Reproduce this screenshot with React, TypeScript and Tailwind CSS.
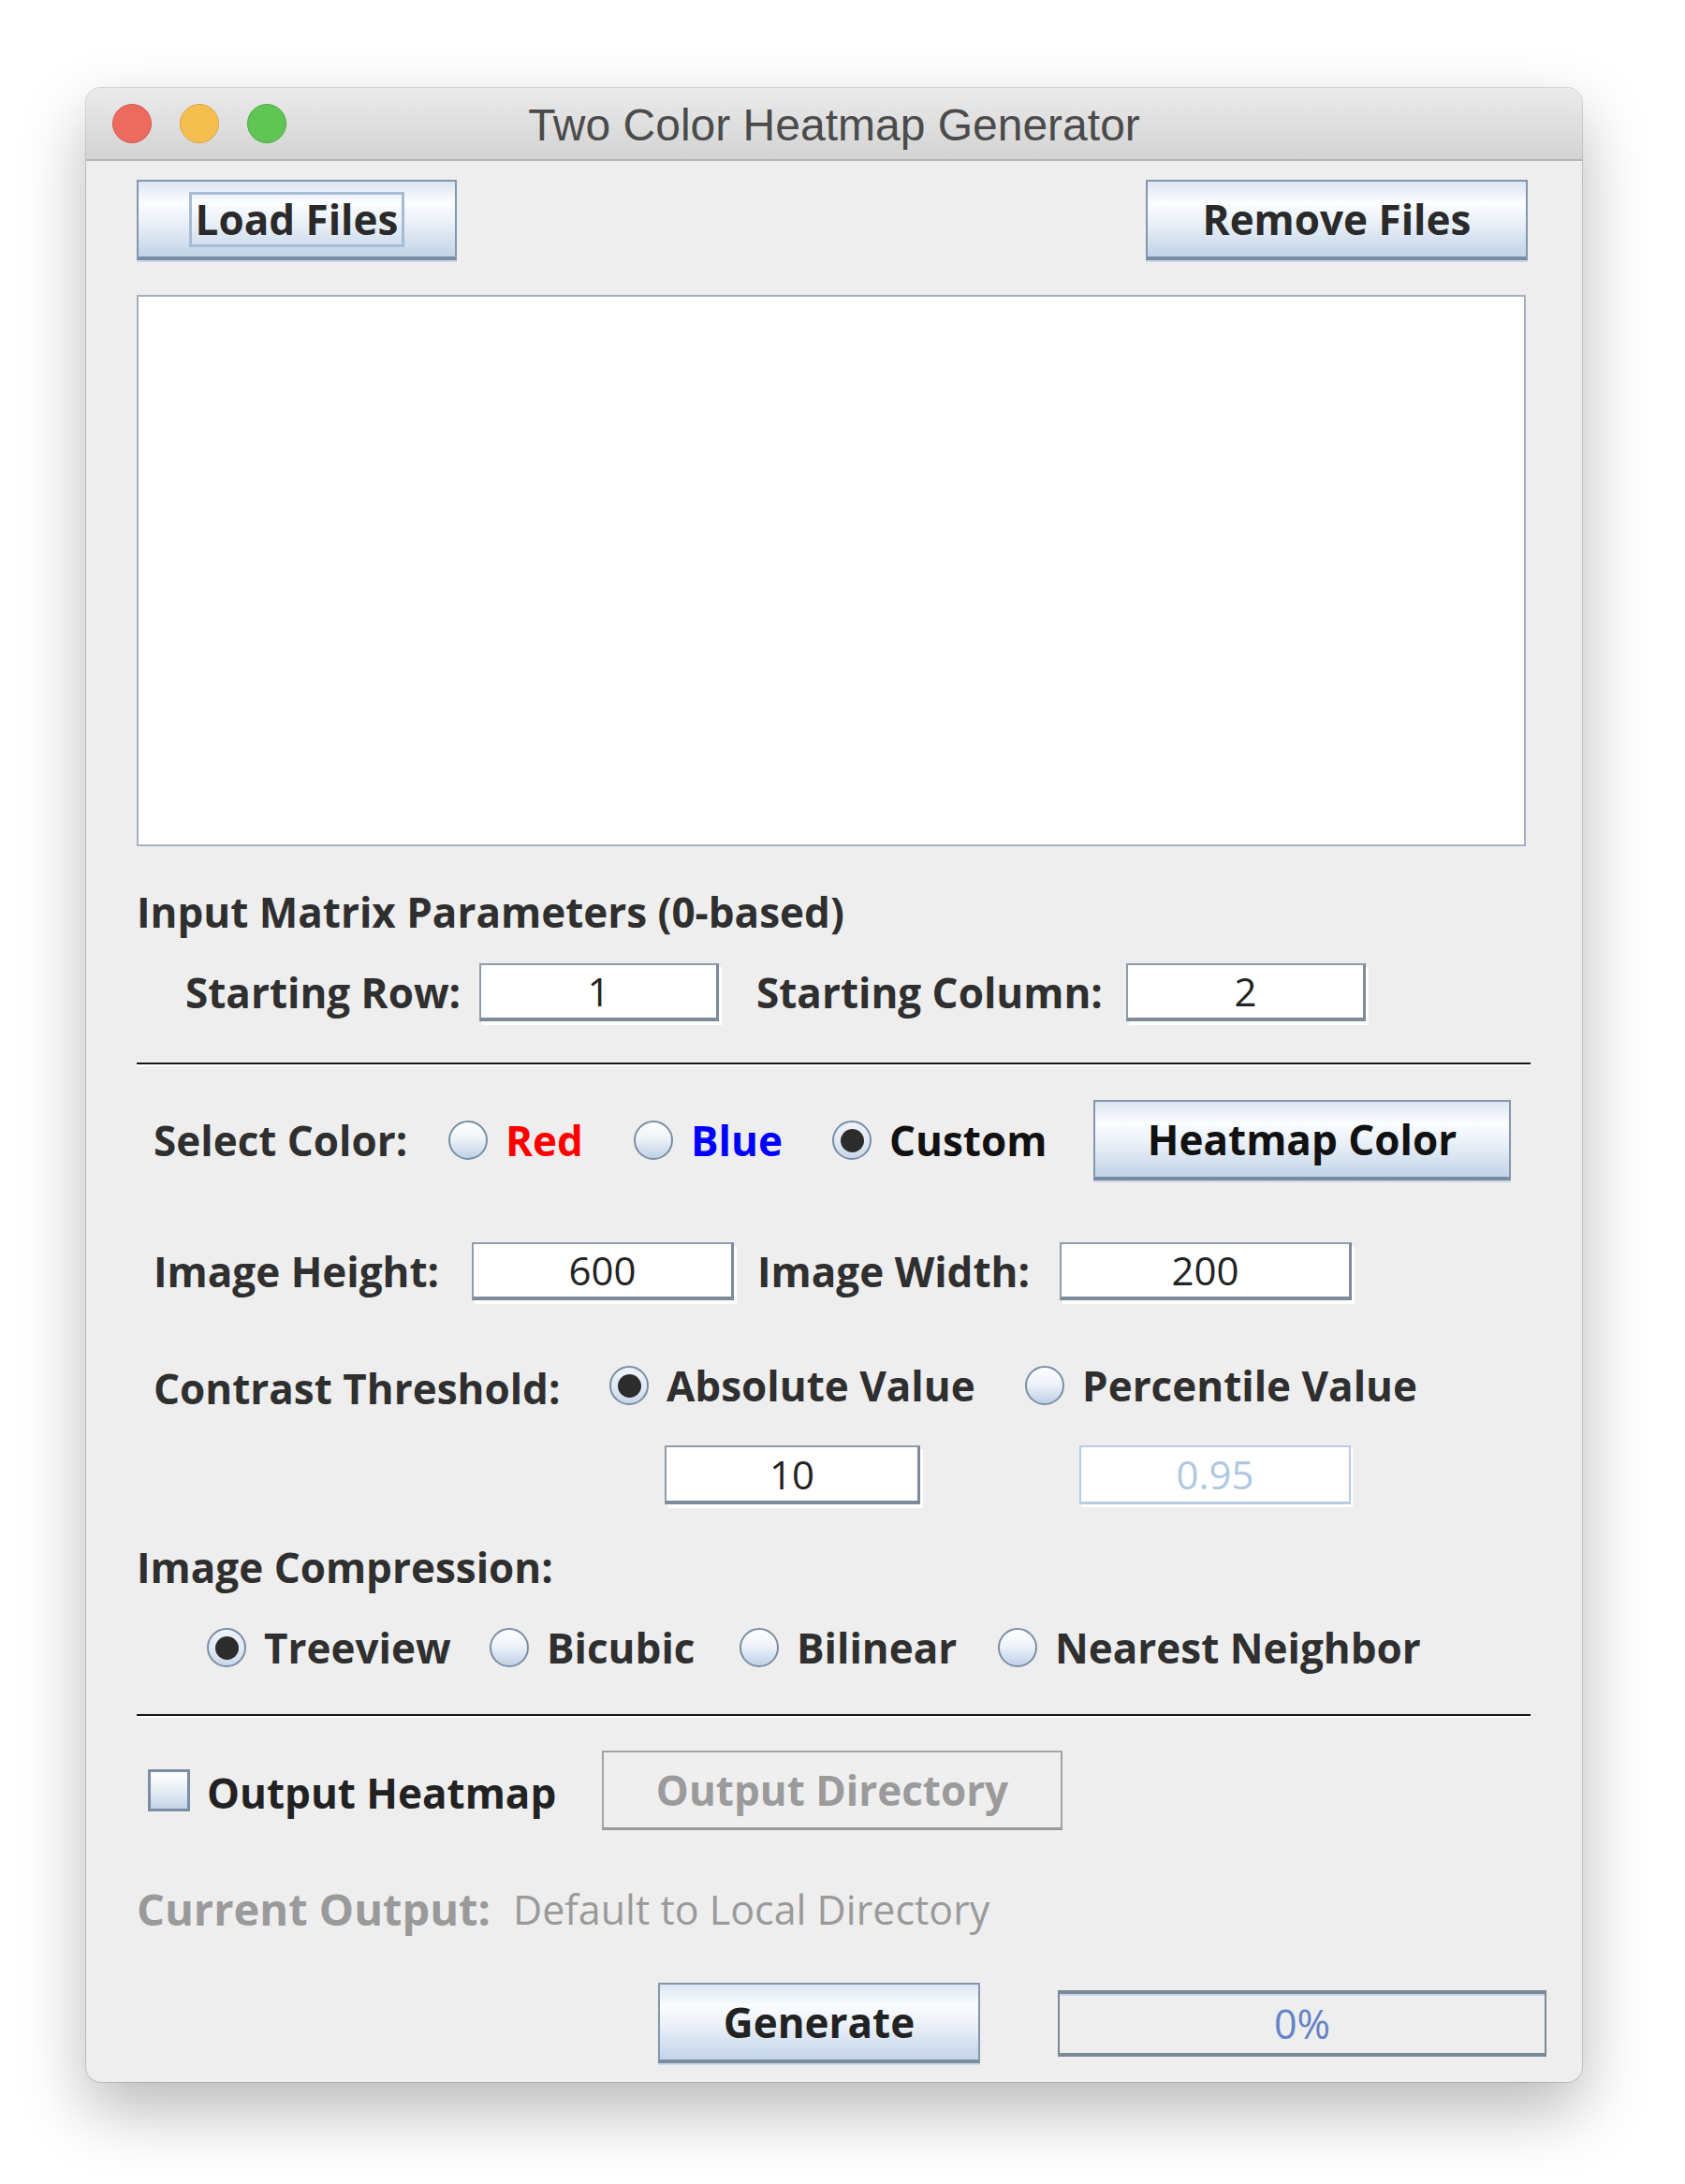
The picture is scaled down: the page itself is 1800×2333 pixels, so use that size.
import clsx from "clsx";

const labelCls = "font-bold text-[44px] leading-none whitespace-nowrap text-[#2f2f2f]";

const buttonCls =
  "flex items-center justify-center font-bold text-[44px] leading-none text-[#2a2a2a] border-2 border-[#8497ac] border-b-4 border-b-[#7a8ca1] shadow-[0_2px_0_#cadaea] bg-[linear-gradient(to_bottom,#dbe5f1_0%,#fbfdff_28%,#eaf0f8_55%,#c2d4e8_100%)]";

function Radio({ checked }: { checked?: boolean }) {
  return (
    <span
      className={clsx(
        "flex h-[42px] w-[42px] shrink-0 items-center justify-center rounded-full border-2 border-[#7b8ea4]",
        checked
          ? "bg-[linear-gradient(to_bottom,#eef3f9_0%,#dfe8f3_60%,#c6d6e9_100%)]"
          : "bg-[linear-gradient(to_bottom,#ffffff_0%,#eef3f9_45%,#bfd1e6_100%)]"
      )}
    >
      {checked && <span className="h-[25px] w-[25px] rounded-full bg-[#2c2c2c]" />}
    </span>
  );
}

function RadioItem({
  label,
  checked,
  className,
  textClass = "text-[#2f2f2f]",
}: {
  label: string;
  checked?: boolean;
  className: string;
  textClass?: string;
}) {
  return (
    <div className={clsx("flex items-center gap-[19px]", className)}>
      <Radio checked={checked} />
      <span className={clsx("font-bold text-[44px] leading-none whitespace-nowrap", textClass)}>{label}</span>
    </div>
  );
}

function Field({ value, className, disabled }: { value: string; className: string; disabled?: boolean }) {
  return (
    <div
      className={clsx(
        "flex items-center justify-center bg-white text-[42px] leading-none",
        disabled
          ? "border-2 border-[#b7cbe2] border-b-[3px] text-[#b1c8e2] shadow-[2px_3px_0_#ffffff]"
          : "border-t-2 border-l-2 border-[#8e9cab] border-r-[3px] border-r-[#7d8b9b] border-b-4 border-b-[#7d8b9b] text-[#232323] shadow-[3px_4px_0_#ffffff]",
        className
      )}
    >
      {value}
    </div>
  );
}

function Separator() {
  return <div className="h-[4px] w-[1489px] border-t-2 border-[#161616] border-b-2 border-b-white" />;
}

function TrafficLights() {
  return (
    <div className="flex items-center gap-[30px] pl-[28px]">
      <span className="h-[42px] w-[42px] rounded-full border border-[#d85a4f] bg-[#ec6a5e]" />
      <span className="h-[42px] w-[42px] rounded-full border border-[#dba53b] bg-[#f5bf4f]" />
      <span className="h-[42px] w-[42px] rounded-full border border-[#4eaa43] bg-[#61c554]" />
    </div>
  );
}

export default function App() {
  return (
    <div className="h-[2333px] w-[1800px] overflow-hidden bg-white pt-[94px] pl-[92px] font-['Open_Sans','Noto_Sans',sans-serif]">
      <div className="flex h-[2130px] w-[1598px] flex-col overflow-hidden rounded-[16px] bg-[#eeeeee] shadow-[0_30px_70px_rgba(0,0,0,0.28),0_0_0_1px_rgba(0,0,0,0.14)]">
        {/* title bar */}
        <div className="grid h-[78px] shrink-0 grid-cols-[1fr_auto_1fr] items-center border-b-2 border-[#b4b4b4] bg-[linear-gradient(to_bottom,#ebebeb_0%,#d3d3d3_100%)]">
          <TrafficLights />
          <span className="pt-[4px] font-['Liberation_Sans',Arial,sans-serif] text-[48px] leading-none text-[#4b4b4b]">
            Two Color Heatmap Generator
          </span>
          <span />
        </div>

        <div className="flex flex-col pl-[54px]">
          {/* file buttons */}
          <div className="mt-[20px] flex w-[1486px] justify-between">
            <button className={clsx(buttonCls, "h-[86px] w-[342px]")}>
              <span className="flex h-[59px] w-[230px] items-center justify-center border-[3px] border-[#a6bcd3]">
                Load Files
              </span>
            </button>
            <button className={clsx(buttonCls, "h-[86px] w-[408px]")}>Remove Files</button>
          </div>

          {/* file list */}
          <div className="mt-[37px] h-[589px] w-[1484px] border-2 border-[#a3b1c0] bg-white" />

          <div className={clsx(labelCls, "mt-[40px] flex h-[60px] items-center")}>Input Matrix Parameters (0-based)</div>

          <div className="mt-[25px] flex h-[62px] items-center pl-[52px]">
            <span className={clsx(labelCls, "w-[314px]")}>Starting Row:</span>
            <Field value="1" className="h-[62px] w-[256px]" />
            <span className={clsx(labelCls, "ml-[40px] w-[395px]")}>Starting Column:</span>
            <Field value="2" className="h-[62px] w-[256px]" />
          </div>

          <div className="mt-[44px]">
            <Separator />
          </div>

          {/* color */}
          <div className="mt-[36px] flex h-[86px] items-center pl-[18px]">
            <span className={clsx(labelCls, "w-[315px]")}>Select Color:</span>
            <RadioItem label="Red" className="w-[198px]" textClass="text-[#ff0000]" />
            <RadioItem label="Blue" className="w-[212px]" textClass="text-[#0000ff]" />
            <RadioItem label="Custom" checked className="w-[279px]" textClass="text-[#111111]" />
            <button className={clsx(buttonCls, "h-[86px] w-[446px] text-[#111111]")}>Heatmap Color</button>
          </div>

          {/* image size */}
          <div className="mt-[66px] flex h-[62px] items-center pl-[18px]">
            <span className={clsx(labelCls, "w-[340px]")}>Image Height:</span>
            <Field value="600" className="h-[62px] w-[280px]" />
            <span className={clsx(labelCls, "ml-[25px] w-[323px]")}>Image Width:</span>
            <Field value="200" className="h-[62px] w-[312px]" />
          </div>

          {/* contrast */}
          <div className="mt-[60px] flex h-[62px] items-center pl-[18px]">
            <span className={clsx(labelCls, "w-[487px] pt-[6px]")}>Contrast Threshold:</span>
            <RadioItem label="Absolute Value" checked className="w-[444px]" />
            <RadioItem label="Percentile Value" className="w-[420px]" />
          </div>

          <div className="mt-[33px] flex h-[63px] items-center pl-[564px]">
            <Field value="10" className="h-[63px] w-[273px]" />
            <Field value="0.95" disabled className="ml-[170px] h-[63px] w-[290px]" />
          </div>

          <div className={clsx(labelCls, "mt-[37px] flex h-[60px] items-center")}>Image Compression:</div>

          <div className="mt-[26px] flex h-[60px] items-center pl-[75px]">
            <RadioItem label="Treeview" checked className="w-[302px]" />
            <RadioItem label="Bicubic" className="w-[267px]" />
            <RadioItem label="Bilinear" className="w-[276px]" />
            <RadioItem label="Nearest Neighbor" className="w-[460px]" />
          </div>

          <div className="mt-[41px]">
            <Separator />
          </div>

          {/* output */}
          <div className="mt-[35px] flex h-[85px] items-center pl-[12px]">
            <div className="flex w-[485px] items-center gap-[18px]">
              <span className="h-[45px] w-[45px] border-[3px] border-[#7b8ea4] bg-[linear-gradient(to_bottom,#ffffff_0%,#eaf0f7_45%,#c2d3e7_100%)]" />
              <span className={clsx(labelCls, "pt-[4px] text-[#222222]")}>Output Heatmap</span>
            </div>
            <button className="flex h-[85px] w-[492px] items-center justify-center border-2 border-[#a3a3a3] border-b-[3px] border-b-[#9a9a9a] bg-[#efefef] text-[44px] font-bold leading-none text-[#9b9b9b]">
              Output Directory
            </button>
          </div>

          <div className="mt-[54px] flex h-[60px] items-center">
            <span className="w-[402px] text-[47px] font-bold leading-none whitespace-nowrap text-[#9a9a9a]">Current Output:</span>
            <span className="text-[43px] leading-none whitespace-nowrap text-[#9a9a9a]">Default to Local Directory</span>
          </div>

          <div className="mt-[49px] flex h-[86px] items-center pl-[557px]">
            <button className={clsx(buttonCls, "h-[86px] w-[344px] text-[#222222]")}>Generate</button>
            <div className="ml-[83px] flex h-[71px] w-[522px] items-center justify-center border-x-2 border-y-4 border-[#7b8897] bg-[#eeeeee] shadow-[inset_0_2px_0_#c8d8ea] text-[43px] leading-none text-[#6383c6]">
              0%
            </div>
          </div>
        </div>
      </div>
    </div>
  );
}
